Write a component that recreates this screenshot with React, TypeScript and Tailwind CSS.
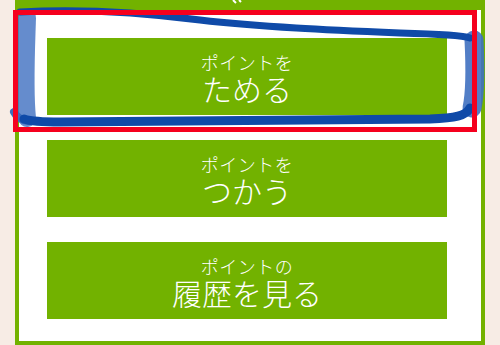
const buttons = [
  { top: "ポイントを", main: "ためる" },
  { top: "ポイントを", main: "つかう" },
  { top: "ポイントの", main: "履歴を見る" },
];

export default function App() {
  return (
    <div
      className="relative w-[500px] h-[345px] overflow-hidden bg-[#f7ece5]"
      style={{ fontFamily: '"Noto Sans CJK JP", "Noto Sans", sans-serif' }}
    >
      <div className="ml-[15px] w-[470px] h-[345px] flex flex-col bg-[#72b200]">
        <div className="h-[10px]" />
        <div className="flex-1 mx-[4px] mb-[4px] bg-white flex flex-col gap-[25px] pt-[28px] pl-[28px]">
          {buttons.map((b) => (
            <button
              key={b.main}
              type="button"
              className="w-[400px] h-[77px] bg-[#72b200] text-white flex flex-col items-center justify-center font-light"
            >
              <span className="text-[18px] leading-[21px] tracking-[0.5px] mt-[2px]">{b.top}</span>
              <span className="text-[30px] leading-[30px]">{b.main}</span>
            </button>
          ))}
        </div>
      </div>

      {/* annotation marks */}
      <svg
        className="absolute inset-0 pointer-events-none"
        width="500"
        height="345"
        viewBox="0 0 500 345"
      >
        <path d="M233 0 L236 3 M239 0 L241 2" stroke="#ffffff" strokeWidth="2" fill="none" />
        <g fill="none" strokeLinecap="round" strokeLinejoin="round">
          <path
            d="M27 118 C 24 90, 26 50, 27 18"
            stroke="#4a78c4"
            strokeWidth="18"
            opacity="0.85"
          />
          <path
            d="M14 112 C 16 116, 20 120, 28 121"
            stroke="#3b6cbb"
            strokeWidth="8"
          />
          <path
            d="M474 40 C 475 60, 476 90, 472 108"
            stroke="#3f70c0"
            strokeWidth="19"
            opacity="0.9"
          />
          <path
            d="M20 12 C 70 9, 130 11, 200 20 C 260 27, 330 30, 400 33 C 440 34, 462 35, 470 38"
            stroke="#0f4aa8"
            strokeWidth="7"
          />
          <path
            d="M470 108 C 466 116, 455 118, 430 119 C 330 120, 200 121, 60 122 C 40 122, 30 121, 24 119"
            stroke="#0f4aa8"
            strokeWidth="9"
          />
        </g>
        <rect
          x="15.5"
          y="12.5"
          width="459"
          height="117"
          fill="none"
          stroke="#f5001e"
          strokeWidth="5"
        />
      </svg>
    </div>
  );
}
